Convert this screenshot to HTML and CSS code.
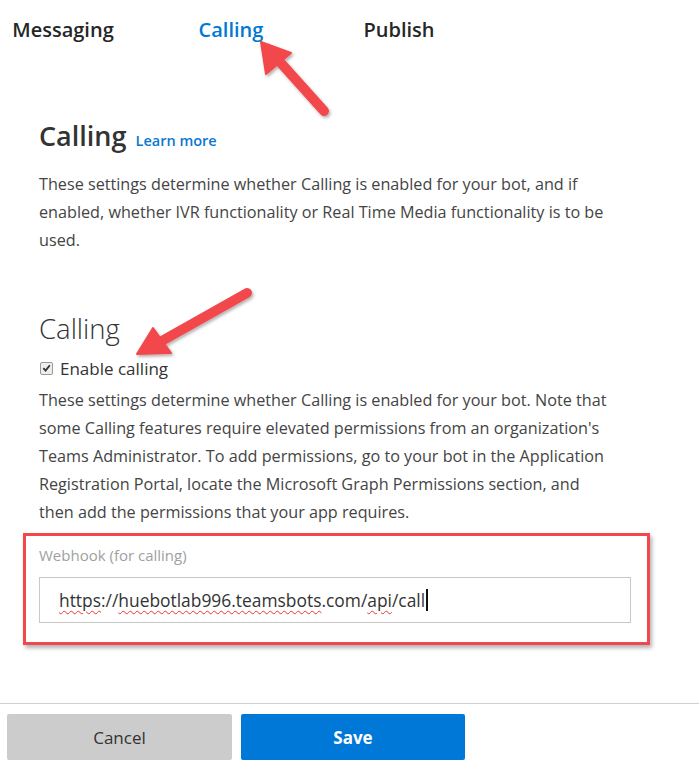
FILE: index.html
```html
<!DOCTYPE html>
<html>
<head>
<meta charset="utf-8">
<link rel="stylesheet" href="styles.css">
</head>
<body>
<div class="page">
  <nav class="tabs">
    <span class="tab">Messaging</span>
    <span class="tab active">Calling</span>
    <span class="tab">Publish</span>
  </nav>
  <main class="content">
    <h1 class="title">Calling <a class="learn">Learn more</a></h1>
    <p class="para first">These settings determine whether Calling is enabled for your bot, and if<br>enabled, whether IVR functionality or Real Time Media functionality is to be<br>used.</p>
    <h2 class="subtitle">Calling</h2>
    <label class="check"><span class="box"><svg width="12" height="12" viewBox="0 0 12 12"><path d="M2.5 6.2 L5 8.8 L9.6 3" fill="none" stroke="#333" stroke-width="2"/></svg></span>Enable calling</label>
    <p class="para second">These settings determine whether Calling is enabled for your bot. Note that<br>some Calling features require elevated permissions from an organization's<br>Teams Administrator. To add permissions, go to your bot in the Application<br>Registration Portal, locate the Microsoft Graph Permissions section, and<br>then add the permissions that your app requires.</p>
    <div class="highlight">
      <div class="label">Webhook (for calling)</div>
      <div class="input"><span class="sp">https</span>://<span class="sp">huebotlab996.teamsbots</span>.com/<span class="sp">api</span>/call<span class="caret"></span></div>
    </div>
  </main>
  <footer class="footer">
    <button class="btn cancel">Cancel</button>
    <button class="btn save">Save</button>
  </footer>
  <svg class="overlay" width="699" height="767" viewBox="0 0 699 767">
    <defs>
      <filter id="sh" x="-20%" y="-20%" width="140%" height="140%">
        <feDropShadow dx="1.5" dy="2" stdDeviation="1.5" flood-color="#000" flood-opacity="0.3"/>
      </filter>
    </defs>
    <g filter="url(#sh)" fill="#f2474b" stroke="#f2474b">
      <line x1="324" y1="111" x2="280" y2="62" stroke-width="10" stroke-linecap="round"/>
      <polygon points="261,42 291,53 266,74" stroke-width="2" stroke-linejoin="round"/>
      <line x1="247" y1="293" x2="160" y2="342" stroke-width="10" stroke-linecap="round"/>
      <polygon points="137,354 153,328 171,353" stroke-width="2" stroke-linejoin="round"/>
    </g>
  </svg>
</div>
</body>
</html>
```
FILE: styles.css
```css
* { box-sizing: border-box; }
html, body { margin: 0; padding: 0; background: #fff; }
body { font-family: "Open Sans", "Noto Sans", sans-serif; color: #333; }
.page { position: relative; width: 699px; height: 767px; overflow: hidden; }
.tabs { display: grid; grid-template-columns: 126px 126px 126px; column-gap: 42px; padding-top: 16px; }
.tab { text-align: center; font-size: 20px; line-height: 28px; font-weight: 600; color: #262626; }
.tab.active { color: #0078d4; }
.content { padding-left: 39px; }
.title { margin: 74px 0 0; font-size: 27px; line-height: 36px; font-weight: 600; color: #333; }
.learn { font-size: 14.5px; font-weight: 600; color: #0a78d2; margin-left: 2px; }
.para { margin: 0; font-size: 16.2px; line-height: 28px; color: #444; white-space: nowrap; }
.para.first { margin-top: 11px; }
.subtitle { margin: 57px 0 0; font-size: 27.5px; line-height: 36px; font-weight: 300; color: #333; }
.check { display: flex; align-items: center; margin-top: 9px; height: 24px; font-size: 17px; color: #333; }
.box { display: inline-flex; align-items: center; justify-content: center; width: 13px; height: 13px; border: 1px solid #999; border-radius: 2px; background: #eee; margin: 0 7px 0 1px; }
.para.second { margin-top: 6px; }
.highlight { margin: 7px 0 0 -16px; width: 627px; border: 3px solid #f2474b; padding: 9px 16px 19px 13px; box-shadow: 2px 3px 4px rgba(0,0,0,0.3); }
.label { font-size: 15px; line-height: 20px; color: #a0a0a0; }
.input { margin-top: 12px; height: 46px; border: 1px solid #c8c8c8; display: flex; align-items: center; padding-left: 19px; font-size: 17.4px; color: #333; }
.sp { text-decoration: underline wavy #e33; text-decoration-thickness: 1px; text-underline-offset: 3px; }
.caret { display: inline-block; width: 2px; height: 22px; background: #111; margin-left: 1px; }
.footer { margin-top: 58px; border-top: 1px solid #cfcfcf; padding: 10px 0 0 7px; display: flex; gap: 9px; }
.btn { width: 225px; height: 46px; border: none; border-radius: 2px; font-family: "Open Sans", "Noto Sans", sans-serif; font-size: 17px; }
.cancel { background: #cccccc; color: #333; }
.save { width: 224px; background: #0078d7; color: #fff; font-weight: 700; }
.overlay { position: absolute; left: 0; top: 0; pointer-events: none; }
```
